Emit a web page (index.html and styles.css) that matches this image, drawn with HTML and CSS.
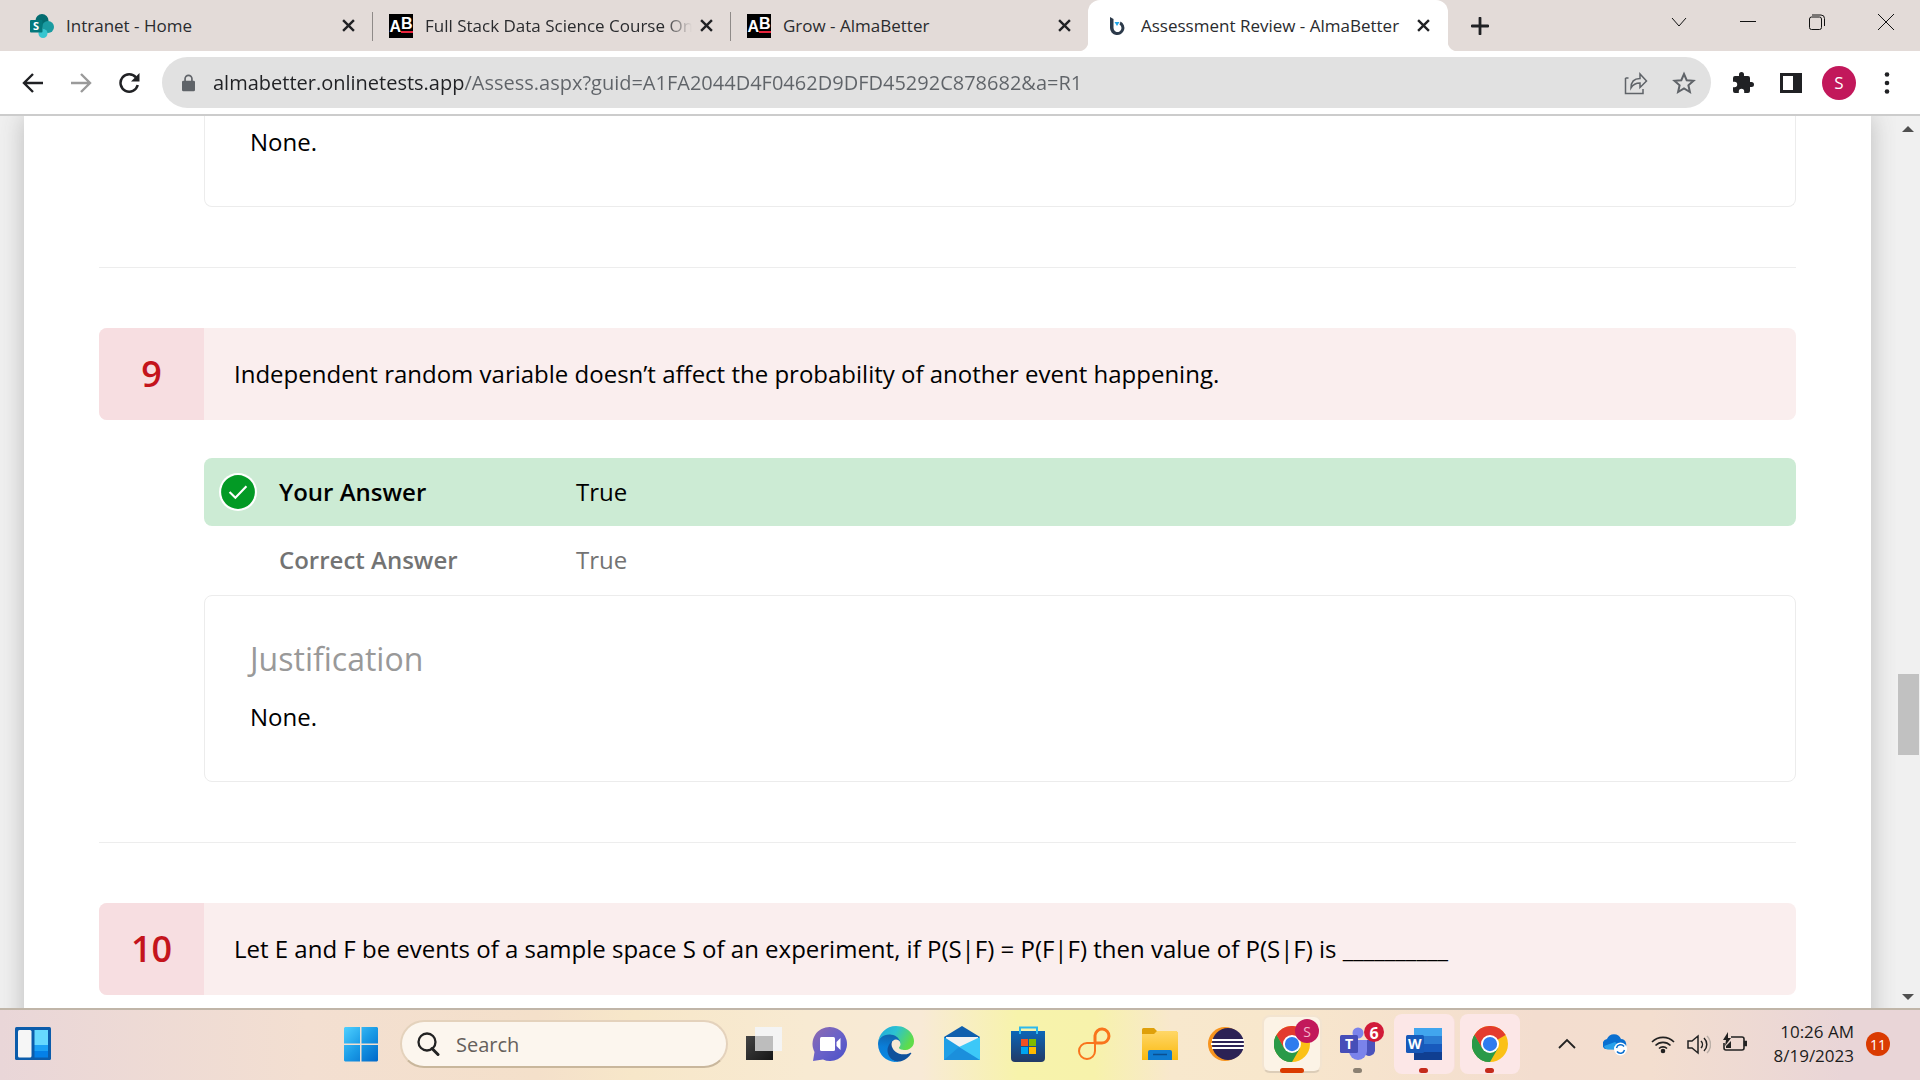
FILE: index.html
```html
<!DOCTYPE html>
<html lang="en">
<head>
<meta charset="utf-8">
<title>Assessment Review - AlmaBetter</title>
<link rel="stylesheet" href="styles.css">
</head>
<body>
<svg class="defs" aria-hidden="true">
  <defs>
    <linearGradient id="gWin" x1="0" y1="0" x2="1" y2="1"><stop offset="0" stop-color="#4fd0ff"/><stop offset=".5" stop-color="#1a9be6"/><stop offset="1" stop-color="#0067c9"/></linearGradient>
    <linearGradient id="gChat" x1="0" y1="0" x2="1" y2="1"><stop offset="0" stop-color="#8f6aae"/><stop offset=".5" stop-color="#6a62c8"/><stop offset="1" stop-color="#4a50c8"/></linearGradient>
    <linearGradient id="gEdgeTop" x1="0" y1="0" x2="1" y2=".4"><stop offset="0" stop-color="#1fa5dc"/><stop offset=".5" stop-color="#2cc2d2"/><stop offset="1" stop-color="#5fdc4a"/></linearGradient>
    <linearGradient id="gEdge" x1=".5" y1="0" x2=".4" y2="1"><stop offset="0" stop-color="#1260a6"/><stop offset=".5" stop-color="#0a7ed8"/><stop offset="1" stop-color="#0a8ae4"/></linearGradient>
    <linearGradient id="gFolder" x1="0" y1="0" x2="0" y2="1"><stop offset="0" stop-color="#ffd768"/><stop offset="1" stop-color="#fab90f"/></linearGradient>
    <linearGradient id="gStore" x1="0" y1="0" x2="0" y2="1"><stop offset="0" stop-color="#0b66b8"/><stop offset="1" stop-color="#223a66"/></linearGradient>
    <linearGradient id="gDark" x1="0" y1="0" x2="1" y2="1"><stop offset="0" stop-color="#444"/><stop offset="1" stop-color="#151515"/></linearGradient>
    <symbol id="close" viewBox="0 0 12 12"><path d="M1 1 11 11M11 1 1 11" fill="none" stroke="#202124" stroke-width="2.2"/></symbol>
    <symbol id="chrome" viewBox="0 0 48 48">
      <circle cx="24" cy="24" r="24" fill="#fbc116"/>
      <path d="M24 24 3.2 12A24 24 0 0 1 44.800 12z" fill="#e33b2e"/>
      <path d="M24 12H44.800L40 8 24 6z" fill="#e33b2e"/>
      <path d="M3.200 12A24 24 0 0 0 24 48L34.400 30 24 24 13.600 30z" fill="#2a9a48"/>
      <path d="M3.200 12 13.600 30 24 24 24 12z" fill="#e33b2e"/>
      <path d="M3.200 12 13.600 30 20 36 24 48A24 24 0 0 1 3.200 12z" fill="#2a9a48"/>
      <circle cx="24" cy="24" r="12" fill="#fff"/><circle cx="24" cy="24" r="9.500" fill="#2f7cee"/>
    </symbol>
  </defs>
</svg>

<header class="browser">
  <nav class="tabs" aria-label="Tabs">
    <div class="tab">
      <svg class="favicon" viewBox="0 0 24 24"><circle cx="12" cy="6.500" r="6.500" fill="#036c70"/><circle cx="18" cy="13" r="6" fill="#1a9ba1"/><circle cx="13" cy="19.500" r="4.500" fill="#37c6d0"/><rect y="6" width="12.500" height="12.500" rx="1" fill="#03787c"/><text x="3" y="16" class="glyph-s">S</text></svg>
      <a class="tab-title" href="#home">Intranet - Home</a>
      <button class="tab-close" aria-label="Close tab"><svg viewBox="0 0 12 12"><use href="#close"/></svg></button>
    </div>
    <div class="tab divided">
      <span class="ab" aria-hidden="true"><span>A</span><span class="ab-b">B</span></span>
      <a class="tab-title fade" href="#course">Full Stack Data Science Course Online</a>
      <button class="tab-close" aria-label="Close tab"><svg viewBox="0 0 12 12"><use href="#close"/></svg></button>
    </div>
    <div class="tab divided">
      <span class="ab" aria-hidden="true"><span>A</span><span class="ab-b">B</span></span>
      <a class="tab-title" href="#grow">Grow - AlmaBetter</a>
      <button class="tab-close" aria-label="Close tab"><svg viewBox="0 0 12 12"><use href="#close"/></svg></button>
    </div>
    <div class="tab active">
      <svg class="favicon" viewBox="0 0 24 24"><path d="M5 3 8.500 5V14a4 4 0 1 0 6-3.500l1-3A7.200 7.200 0 1 1 5 14z" fill="#2c3a4a"/><path d="M9.500 8h5l-2.500 4z" fill="#1da4e8"/></svg>
      <a class="tab-title" href="#review" aria-current="page">Assessment Review - AlmaBetter</a>
      <button class="tab-close" aria-label="Close tab"><svg viewBox="0 0 12 12"><use href="#close"/></svg></button>
    </div>
    <button class="new-tab" aria-label="New tab"><svg viewBox="0 0 18 18"><path d="M9 1v16M1 9h16" stroke="#202124" stroke-width="2.800" stroke-linecap="round"/></svg></button>
    <div class="window-controls">
      <button aria-label="Search tabs"><svg viewBox="0 0 16 16"><path d="M1 4l7 8 7-8"/></svg></button>
      <button aria-label="Minimize"><svg viewBox="0 0 16 16"><path d="M0 7.500h16"/></svg></button>
      <button aria-label="Restore"><svg viewBox="0 0 16 16"><rect x=".5" y="3" width="12" height="12.500" rx="2"/><path d="M3 1h9a3.500 3.500 0 0 1 3.500 3.500V12"/></svg></button>
      <button aria-label="Close window"><svg viewBox="0 0 16 16"><path d="M0 0l16 16M16 0 0 16"/></svg></button>
    </div>
  </nav>
  <div class="toolbar">
    <button class="nav-btn" aria-label="Back"><svg viewBox="0 0 22 22"><path d="M21 11H2M11 2l-9 9 9 9" fill="none" stroke="#202124" stroke-width="2.400"/></svg></button>
    <button class="nav-btn" aria-label="Forward"><svg viewBox="0 0 22 22"><path d="M1 11h19M11 2l9 9-9 9" fill="none" stroke="#9a9a9a" stroke-width="2.400"/></svg></button>
    <button class="nav-btn" aria-label="Reload"><svg viewBox="0 0 22 22"><path d="M18 5.500A8.700 8.700 0 1 0 19.700 13" fill="none" stroke="#202124" stroke-width="2.500"/><path d="M21.500 1v8.500H13z" fill="#202124"/></svg></button>
    <form class="omnibox">
      <svg class="lock" viewBox="0 0 14 18"><rect y="6.500" width="14" height="11.500" rx="1.500" fill="#5f6368"/><path d="M3.300 7V4.500a3.700 3.700 0 0 1 7.400 0V7" fill="none" stroke="#5f6368" stroke-width="1.800"/></svg>
      <input class="url" aria-label="Address" value="almabetter.onlinetests.app/Assess.aspx?guid=A1FA2044D4F0462D9DFD45292C878682&amp;a=R1">
      <button type="button" aria-label="Share"><svg viewBox="0 0 24 24"><path d="M1.500 7v15.500H19V18M1.500 7h3M7 17c0-6 3-9.500 9-9.500V3l6.500 7-6.500 6.500V12c-4 0-7 1.500-9 5z" fill="none" stroke="#5f6368" stroke-width="1.500"/></svg></button>
      <button type="button" aria-label="Bookmark"><svg viewBox="0 0 24 24"><path d="M12 3l2.700 6.200 6.800.6-5.100 4.500 1.500 6.700L12 17.500 6.100 21l1.500-6.700-5.100-4.500 6.800-.6z" fill="none" stroke="#5f6368" stroke-width="2"/></svg></button>
    </form>
    <div class="tools">
      <button aria-label="Extensions"><svg viewBox="0 0 24 24"><path d="M20.500 11H19V7a2 2 0 0 0-2-2h-4V3.500a2.500 2.500 0 0 0-5 0V5H4a2 2 0 0 0-2 2v3.800h1.500a2.700 2.700 0 0 1 0 5.400H2V20a2 2 0 0 0 2 2h3.800v-1.500a2.700 2.700 0 0 1 5.400 0V22H17a2 2 0 0 0 2-2v-4h1.500a2.500 2.500 0 0 0 0-5z" fill="#202124"/></svg></button>
      <button aria-label="Side panel"><svg viewBox="0 0 24 24"><path d="M1 2h22v20H1zM4 5v14h10V5z" fill="#202124" fill-rule="evenodd"/></svg></button>
      <button class="avatar" aria-label="Profile">S</button>
      <button aria-label="Menu"><svg viewBox="0 0 24 24" fill="#202124"><circle cx="12" cy="3.500" r="2.300"/><circle cx="12" cy="12" r="2.300"/><circle cx="12" cy="20.500" r="2.300"/></svg></button>
    </div>
  </div>
</header>

<div class="viewport">
  <main class="sheet">
    <div class="justification continued"><p>None.</p></div>
    <hr>
    <section class="question">
      <h2 class="prompt"><span class="number">9</span><span class="prompt-text">Independent random variable doesn’t affect the probability of another event happening.</span></h2>
      <dl class="answers">
        <div class="answer correct">
          <svg class="check" viewBox="0 0 36 36"><circle cx="18" cy="18" r="18" fill="#fff"/><circle cx="18" cy="18" r="16" fill="#039a25"/><path d="M10 18l5.500 5.500L26 12.500" fill="none" stroke="#fff" stroke-width="2"/></svg>
          <dt>Your Answer</dt><dd>True</dd>
        </div>
        <div class="answer"><dt>Correct Answer</dt><dd>True</dd></div>
      </dl>
      <div class="justification"><h3>Justification</h3><p>None.</p></div>
    </section>
    <hr>
    <section class="question">
      <h2 class="prompt"><span class="number">10</span><span class="prompt-text">Let E and F be events of a sample space S of an experiment, if P(S|F) = P(F|F) then value of P(S|F) is __________</span></h2>
    </section>
  </main>
  <div class="scrollbar" aria-hidden="true">
    <span class="arrow up"></span>
    <span class="track"><span class="thumb"></span></span>
    <span class="arrow down"></span>
  </div>
</div>

<footer class="taskbar">
  <div class="left">
    <button aria-label="Widgets"><svg class="icon" viewBox="0 0 36 36"><rect y="1" width="36" height="33" rx="1.500" fill="#0b5cab"/><rect x="3" y="4" width="13.500" height="27.500" rx="1.500" fill="#f6f6f6"/><path d="M19.500 4h13.500v15H19.500z" fill="#66d9ff"/><path d="M19.500 19h13.500v6H19.500z" fill="#1ba1f5"/><path d="M19.500 25h13.500v6.500H19.500z" fill="#0480e8"/></svg></button>
  </div>
  <div class="apps">
    <button class="start" aria-label="Start"><svg class="icon" viewBox="0 0 36 36"><path d="M2 1h15v16.500H1V2zM18.500 1H34l1 1v15.500H18.500zM1 19h16v16.500H2l-1-1zM18.500 19H35v15.500l-1 1H18.500z" fill="url(#gWin)"/></svg></button>
    <label class="search">
      <svg viewBox="0 0 24 24"><circle cx="11" cy="10" r="8.500" fill="none" stroke="#222" stroke-width="2.300"/><path d="M16 16.500l6 6" stroke="#222" stroke-width="3" stroke-linecap="round"/></svg>
      <input type="search" placeholder="Search" aria-label="Search">
    </label>
    <button class="app" aria-label="Task view"><svg class="icon" viewBox="0 0 36 36"><path d="M0 10h27v24H0z" fill="url(#gDark)"/><path d="M9 1h27v24H9z" fill="#f4f4f4"/><path d="M9 10h18v15H9z" fill="#bdbdbd"/></svg></button>
    <button class="app" aria-label="Chat"><svg class="icon" viewBox="0 0 36 36"><path d="M18 1A17 17 0 1 1 11 33.500L1 35l1.500-9A17 17 0 0 1 18 1z" fill="url(#gChat)"/><rect x="8" y="11" width="15" height="14" rx="1.500" fill="#fff"/><path d="M24.500 16l4-4v12l-4-4z" fill="#fff"/></svg></button>
    <button class="app" aria-label="Edge"><svg class="icon" viewBox="0 0 256 256"><path d="M231 190.500c-3.400 1.800-6.900 3.400-10.500 4.700a101.900 101.900 0 0 1-35.900 6.400c-47.300 0-88.500-32.500-88.500-74.300a31.500 31.500 0 0 1 16.400-27.300c-42.800 1.800-53.800 46.400-53.800 72.500 0 74 68.100 81.400 82.800 81.400 7.900 0 19.800-2.300 27-4.600l1.300-.4a128.300 128.300 0 0 0 66.600-52.800 4 4 0 0 0-5.400-5.600z" fill="#0f519c"/><path d="M105.700 241.400a79.200 79.200 0 0 1-22.700-21.300 80.700 80.700 0 0 1 29.500-120c3.200-1.500 8.500-4.100 15.600-4a32.400 32.400 0 0 1 25.700 13 31.900 31.900 0 0 1 6.300 18.700c0-.2 24.500-79.600-80-79.600-43.900 0-80 41.600-80 78.200a130.200 130.200 0 0 0 12.100 56 128 128 0 0 0 156.400 67 75.600 75.600 0 0 1-62.800-8z" fill="url(#gEdge)"/><path d="M152.300 148.900c-.8 1-3.300 2.500-3.300 5.600 0 2.600 1.700 5.100 4.700 7.200 14.400 10 41.500 8.700 41.600 8.700a59.600 59.600 0 0 0 30.300-8.300 61.400 61.400 0 0 0 30.400-52.900c.3-22.400-8-37.300-11.300-43.900C223.500 23.800 177.700 0 128 0A128 128 0 0 0 0 126.200c.5-36.500 36.800-66 80-66 3.500 0 23.500.3 42 10a72.600 72.600 0 0 1 30.900 29.300c6.100 10.600 7.200 24.100 7.200 29.500s-2.700 13.300-7.800 19.900z" fill="url(#gEdgeTop)"/></svg></button>
    <button class="app" aria-label="Mail"><svg class="icon" viewBox="0 0 36 36"><path d="M0 11 18 0l18 11v6H0z" fill="#0f5fae"/><path d="M2 11h32v12H2z" fill="#f2f2f2"/><path d="M0 11 36 34H0z" fill="#1f9fe6"/><path d="M36 11v23H31L15 21z" fill="#3cc8f8"/><path d="M15 21 36 34H0z" fill="#1b8fdc"/></svg></button>
    <button class="app" aria-label="Store"><svg class="icon" viewBox="0 0 36 36"><path d="M10 7V1.500h17V7" fill="none" stroke="#2cb9ee" stroke-width="2"/><path d="M1 5h34v27a4 4 0 0 1-4 4H5a4 4 0 0 1-4-4z" fill="url(#gStore)"/><path d="M9 5h2v3H9zM26 5h2v3h-2z" fill="#2cb9ee"/><path d="M11 13h7v7h-7z" fill="#f25022"/><path d="M19 13h7v7h-7z" fill="#7fba00"/><path d="M11 21h7v7h-7z" fill="#00a4ef"/><path d="M19 21h7v7h-7z" fill="#ffb900"/></svg></button>
    <button class="app" aria-label="Infinity"><svg class="icon" viewBox="0 0 36 36" fill="none" stroke="#f9741c"><path d="M19 17V9.500a7 7 0 1 1 7 7.500H19" stroke-width="3"/><path d="M19 17v8a8 8 0 1 1-8-8h8" stroke-width="2"/></svg></button>
    <button class="app" aria-label="File Explorer"><svg class="icon" viewBox="0 0 36 36"><path d="M0 3.500Q0 2 1.500 2H12l3 3h19l2 2v8H0z" fill="#dfa00a"/><path d="M0 8h12l3-3h19.500L36 6.500V34H0z" fill="url(#gFolder)"/><path d="M6 34V26q0-2 2-2h20q2 0 2 2v8z" fill="#0f7bd0"/><path d="M11 28.500h14" stroke="#0a4f90" stroke-width="1.500"/></svg></button>
    <button class="app" aria-label="Eclipse"><svg class="icon" viewBox="0 0 36 36"><circle cx="17" cy="18" r="17" fill="#f7941e"/><circle cx="20" cy="18" r="16" fill="#2c2255"/><path d="M4 14h32M3 18h33M4 22h32" stroke="#fff" stroke-width="2"/></svg></button>
    <button class="app running focused" aria-label="Chrome, S"><svg class="icon" viewBox="0 0 36 36"><use href="#chrome"/></svg><span class="badge">S</span></button>
    <button class="app running idle" aria-label="Teams, 6"><svg class="icon" viewBox="0 0 36 36"><circle cx="18" cy="7" r="5.500" fill="#7b83eb"/><circle cx="31" cy="9" r="4" fill="#5059c9"/><path d="M26 14h9v11a6 6 0 0 1-9 4z" fill="#4b53bc"/><path d="M9 14h18v11a9 9 0 0 1-18 0z" fill="#7b83eb"/><rect y="9" width="18" height="18" rx="1.500" fill="#464eb8"/><text x="5" y="23" class="glyph">T</text></svg><span class="badge red">6</span></button>
    <button class="app running alert stacked" aria-label="Word"><svg class="icon" viewBox="0 0 36 36"><path d="M8 2h28v8H8z" fill="#41a5ee"/><path d="M8 10h28v8H8z" fill="#2b7cd3"/><path d="M8 18h28v8H8z" fill="#185abd"/><path d="M8 26h28v8H8z" fill="#103f91"/><rect y="9" width="18" height="18" rx="1.500" fill="#1759b9"/><text x="2" y="23" class="glyph">W</text></svg></button>
    <button class="app running alert" aria-label="Chrome"><svg class="icon" viewBox="0 0 36 36"><use href="#chrome"/></svg></button>
  </div>
  <div class="tray">
    <button aria-label="Show hidden icons"><svg viewBox="0 0 24 24"><path d="M4 16l8-8 8 8" fill="none" stroke="#222" stroke-width="1.800"/></svg></button>
    <button class="cloud" aria-label="OneDrive"><svg viewBox="0 0 24 24"><path d="M2 17a5.500 5.500 0 0 1 2-10A7.500 7.500 0 0 1 18 7a5.500 5.500 0 0 1 2 10.500z" fill="#0a6fd0"/><path d="M1 14l11-4 9 7.500H5q-3 0-4-3.500z" fill="#28a0ea"/><circle cx="17.500" cy="17" r="6.500" fill="#fff"/><path d="M13.500 16a4.200 4.200 0 0 1 7.500-1.500M21.500 18a4.200 4.200 0 0 1-7.500 1.500" fill="none" stroke="#0a6fd0" stroke-width="1.500"/></svg></button>
    <div class="status">
      <svg viewBox="0 0 24 24" fill="none" stroke="#222" stroke-width="1.600"><path d="M1 10a15.500 15.500 0 0 1 22 0M4.500 13.500a10.600 10.600 0 0 1 15 0M8 16.500a5.700 5.700 0 0 1 8 0"/><circle cx="12" cy="19" r="1.500" fill="#222"/></svg>
      <svg viewBox="0 0 24 24" fill="none" stroke="#222" stroke-width="1.500"><path d="M1 9h4l6-5v17l-6-5H1zM14 9a5 5 0 0 1 0 7M17 6a9 9 0 0 1 0 13"/><path d="M20 4a12 12 0 0 1 0 17" stroke="#bbb0a8"/></svg>
      <svg viewBox="0 0 24 24" fill="none" stroke="#222" stroke-width="1.600"><path d="M8 5h11a2 2 0 0 1 2 2v9a2 2 0 0 1-2 2H3a2 2 0 0 1-2-2v-5"/><path d="M21.500 9.500h2v4h-2z" fill="#222"/><path d="M5 0 0 8h3l-1 6 6-8H5z" fill="#222" stroke="none"/><path d="M3 16v-2l5-5v7z" fill="#222" stroke="none"/></svg>
    </div>
    <time class="clock" datetime="2023-08-19T10:26">10:26 AM<br>8/19/2023</time>
    <span class="count">11</span>
  </div>
</footer>
</body>
</html>
```
FILE: styles.css
```css
* { box-sizing: border-box; }

body {
  margin: 0;
  height: 100vh;
  display: flex;
  flex-direction: column;
  overflow: hidden;
  font-family: "Open Sans", "Noto Sans", sans-serif;
  color: #000;
}

button {
  display: flex;
  align-items: center;
  justify-content: center;
  flex: none;
  padding: 0;
  border: 0;
  background: none;
  font: inherit;
}

input {
  border: 0;
  outline: 0;
  padding: 0;
  background: none;
  font: inherit;
}

.defs { position: absolute; width: 0; height: 0; }

/* Browser tabs */
.tabs {
  display: flex;
  height: 51px;
  background: #e3dbd8;
}

.tab {
  position: relative;
  display: flex;
  align-items: center;
  flex: 0 1 358px;
  min-width: 0;
  padding: 0 16px 0 17px;
  gap: 12px;
}

.tab:first-child { flex-basis: 372px; padding-left: 30px; }
.tab.active { flex-basis: 360px; padding-right: 17px; background: #fff; border-radius: 12px 12px 0 0; }

.tab.active::before,
.tab.active::after {
  content: "";
  position: absolute;
  bottom: 0;
  width: 10px;
  height: 10px;
}
.tab.active::before { right: 100%; background: radial-gradient(circle at 0 0, #e3dbd8 10px, #fff 11px); }
.tab.active::after { left: 100%; background: radial-gradient(circle at 100% 0, #e3dbd8 10px, #fff 11px); }

.tab.divided::before {
  content: "";
  position: absolute;
  left: 0;
  top: 12px;
  width: 1px;
  height: 29px;
  background: #8f8a88;
}

.favicon { flex: none; width: 24px; height: 24px; }
.glyph-s { font: bold 11px "Open Sans", sans-serif; fill: #fff; }
.glyph { font: bold 14px "Open Sans", sans-serif; fill: #fff; }

.ab {
  display: flex;
  align-items: flex-end;
  justify-content: center;
  flex: none;
  width: 24px;
  height: 24px;
  padding-bottom: 3px;
  background: #000;
  color: #fff;
  font: bold 16px/16px "Liberation Sans", sans-serif;
}
.ab-b { line-height: 14px; margin-bottom: 2px; border-bottom: 2px solid #e8243c; }

.tab-title {
  flex: 1;
  min-width: 0;
  overflow: hidden;
  white-space: nowrap;
  color: #2a2b2e;
  font-size: 17px;
  line-height: 24px;
  text-decoration: none;
}
.tab-title.fade { margin-right: -6px; mask-image: linear-gradient(90deg, #000 calc(100% - 28px), transparent); }

.tab-close { width: 16px; height: 24px; }
.tab-close svg { width: 13px; height: 13px; }

.new-tab { width: 64px; }
.new-tab svg { width: 18px; height: 18px; }

.window-controls { display: flex; margin-left: auto; height: 43px; }
.window-controls button { width: 69px; }
.window-controls svg { width: 16px; height: 16px; fill: none; stroke: #111; stroke-width: 1; }

/* Toolbar */
.toolbar {
  display: flex;
  align-items: center;
  height: 65px;
  padding: 0 9px;
  border-bottom: 2px solid #ccc;
  background: #fff;
}

.nav-btn { width: 48px; height: 48px; }
.nav-btn svg { width: 22px; height: 22px; }

.omnibox {
  display: flex;
  align-items: center;
  flex: 1;
  height: 51px;
  margin-left: 9px;
  padding: 0 3px 0 20px;
  border-radius: 26px;
  background: #e1e1e1;
}
.omnibox button { width: 48px; height: 48px; }
.omnibox button svg { width: 24px; height: 24px; }
.lock { flex: none; width: 13px; height: 18px; margin-right: 18px; }

/* The host is drawn darker than the rest of the address */
.url {
  flex: 1;
  min-width: 0;
  height: 32px;
  font-size: 20px;
  color: #5f6368;
  background: linear-gradient(90deg, #202124 251px, #5f6368 251px);
  background-clip: text;
  -webkit-text-fill-color: transparent;
}

.tools { display: flex; align-items: center; padding-left: 8px; }
.tools button { width: 48px; height: 48px; }
.tools svg { width: 24px; height: 24px; }
.tools .avatar {
  width: 34px;
  height: 34px;
  margin: 0 7px;
  border-radius: 50%;
  background: #c2185b;
  color: #fff;
  font-size: 17px;
}

/* Assessment page */
.viewport {
  display: flex;
  flex: 1;
  min-height: 0;
  overflow: hidden;
  background: #f0f0f0;
}

.sheet {
  flex: 1;
  height: 1200px;
  margin: 0 25px 0 24px;
  padding: 0 75px;
  background: #fff;
  box-shadow: 0 0 24px #bbb;
  font-size: 24px;
  line-height: 36px;
}

.sheet p, .sheet h2, .sheet h3, .sheet dl, .sheet dd { margin: 0; font-weight: 400; }

.sheet hr {
  height: 1px;
  margin: 60px 0;
  border: 0;
  background: #ededed;
}

.justification {
  height: 187px;
  margin-left: 105px;
  padding: 39px 45px;
  border: 1px solid #ececec;
  border-radius: 8px;
}
.sheet .justification h3 {
  margin-bottom: 16px;
  color: #999;
  font-size: 32px;
  line-height: 48px;
}
.continued {
  height: 91px;
  padding-top: 8px;
  border-top: 0;
  border-radius: 0 0 8px 8px;
}

.prompt {
  display: flex;
  align-items: center;
  min-height: 92px;
  border-radius: 8px;
  background: #faeeee;
  overflow: hidden;
  font-size: 24px;
}
.number {
  display: flex;
  align-items: center;
  justify-content: center;
  align-self: stretch;
  width: 105px;
  background: #f7dee1;
  color: #c4141c;
  font-size: 36px;
  font-weight: 600;
}
.prompt-text { padding: 0 30px; }

.sheet .answers { margin: 38px 0 1px 105px; }
.answer {
  display: grid;
  grid-template-columns: 60px 297px 1fr;
  align-items: center;
  height: 68px;
  padding-left: 15px;
  color: #737373;
}
.answer dt { grid-column: 2; font-weight: 600; }
.answer.correct { border-radius: 8px; background: #ccebd4; color: #000; }
.check { width: 38px; height: 38px; }

/* Scrollbar */
.scrollbar {
  display: flex;
  flex-direction: column;
  align-items: center;
  flex: none;
  width: 24px;
  padding: 10px 0 8px;
  background: #f0f0f0;
}
.arrow { border: 6px solid transparent; }
.up { border-top: 0; border-bottom-color: #505050; }
.down { border-bottom: 0; border-top-color: #505050; }
.track {
  display: grid;
  grid-template-rows: 542fr 81fr 239fr;
  flex: 1;
  width: 21px;
}
.thumb { grid-row: 2; background: #c1c1c1; }

/* Taskbar */
.taskbar {
  display: flex;
  align-items: center;
  height: 72px;
  padding-bottom: 2px;
  border-top: 2px solid #c0b5a8;
  background: linear-gradient(90deg, #e9d6d8, #f3dfd1 16%, #f4e0ca 28%, #f7e7c9 33%, #f8ead2 42%, #f8ead6 48%, #f7f3ab 53%, #f7f2ab 57%, #f8e8cd 61%, #f8e7cc 66%, #f3ddcf 80%, #f3deCf 86%, #e9d5d7 96%, #e9d5d7);
}
.icon { display: block; width: 36px; height: 36px; }
.left { flex: 329 1 0; padding-left: 15px; }
.apps { display: flex; align-items: center; flex: none; }
.start { width: 66px; height: 60px; }

.search {
  display: flex;
  align-items: center;
  width: 328px;
  height: 48px;
  margin: 0 4px 0 6px;
  padding: 0 14px;
  gap: 16px;
  border: 2px solid #e4d2bc;
  border-bottom-color: #c9b79c;
  border-radius: 24px;
  background: #fcf6ee;
}
.search svg { flex: none; width: 24px; height: 24px; }
.search input { flex: 1; min-width: 0; font-size: 20px; }
.search input::placeholder { color: #65605b; opacity: 1; }

.app {
  position: relative;
  width: 60px;
  height: 60px;
  margin-left: 6px;
  border-radius: 8px;
}
.search + .app { margin-left: 2px; }
.running::after {
  content: "";
  position: absolute;
  bottom: 1px;
  width: 9px;
  height: 5px;
  border-radius: 3px;
  background: #c42b1c;
}
.focused {
  height: 58px;
  border: 2px solid #f3e4d0;
  border-bottom-color: #dccdb8;
  background: #fcf3e6;
}
.focused::after { bottom: -2px; width: 24px; background: #da3b01; }
.idle::after { background: #8b8072; }
.alert { background: #fce7e7; }
.stacked { box-shadow: 2px 0 0 -1px #f7dfda; }

.badge {
  position: absolute;
  display: grid;
  place-items: center;
  top: 2px;
  right: 1px;
  width: 24px;
  height: 24px;
  border-radius: 50%;
  background: #c2185b;
  color: #f5b5cc;
  font-size: 14px;
}
.badge.red {
  top: 8px;
  right: 4px;
  width: 20px;
  height: 20px;
  background: #d11a38;
  color: #fff;
  font-size: 16px;
  font-weight: 700;
}

.tray {
  display: flex;
  align-items: center;
  justify-content: flex-end;
  flex: 389 1 0;
  padding-right: 30px;
}
.tray svg { width: 24px; height: 24px; }
.cloud { margin: 0 24px; }
.status { display: flex; gap: 12px; }
.clock {
  margin: 0 12px 0 26px;
  color: #1c1c1c;
  font-size: 17px;
  line-height: 24px;
  text-align: right;
}
.count {
  display: grid;
  place-items: center;
  width: 24px;
  height: 24px;
  border-radius: 50%;
  background: #da3b01;
  color: #fff;
  font-size: 14px;
}
```
